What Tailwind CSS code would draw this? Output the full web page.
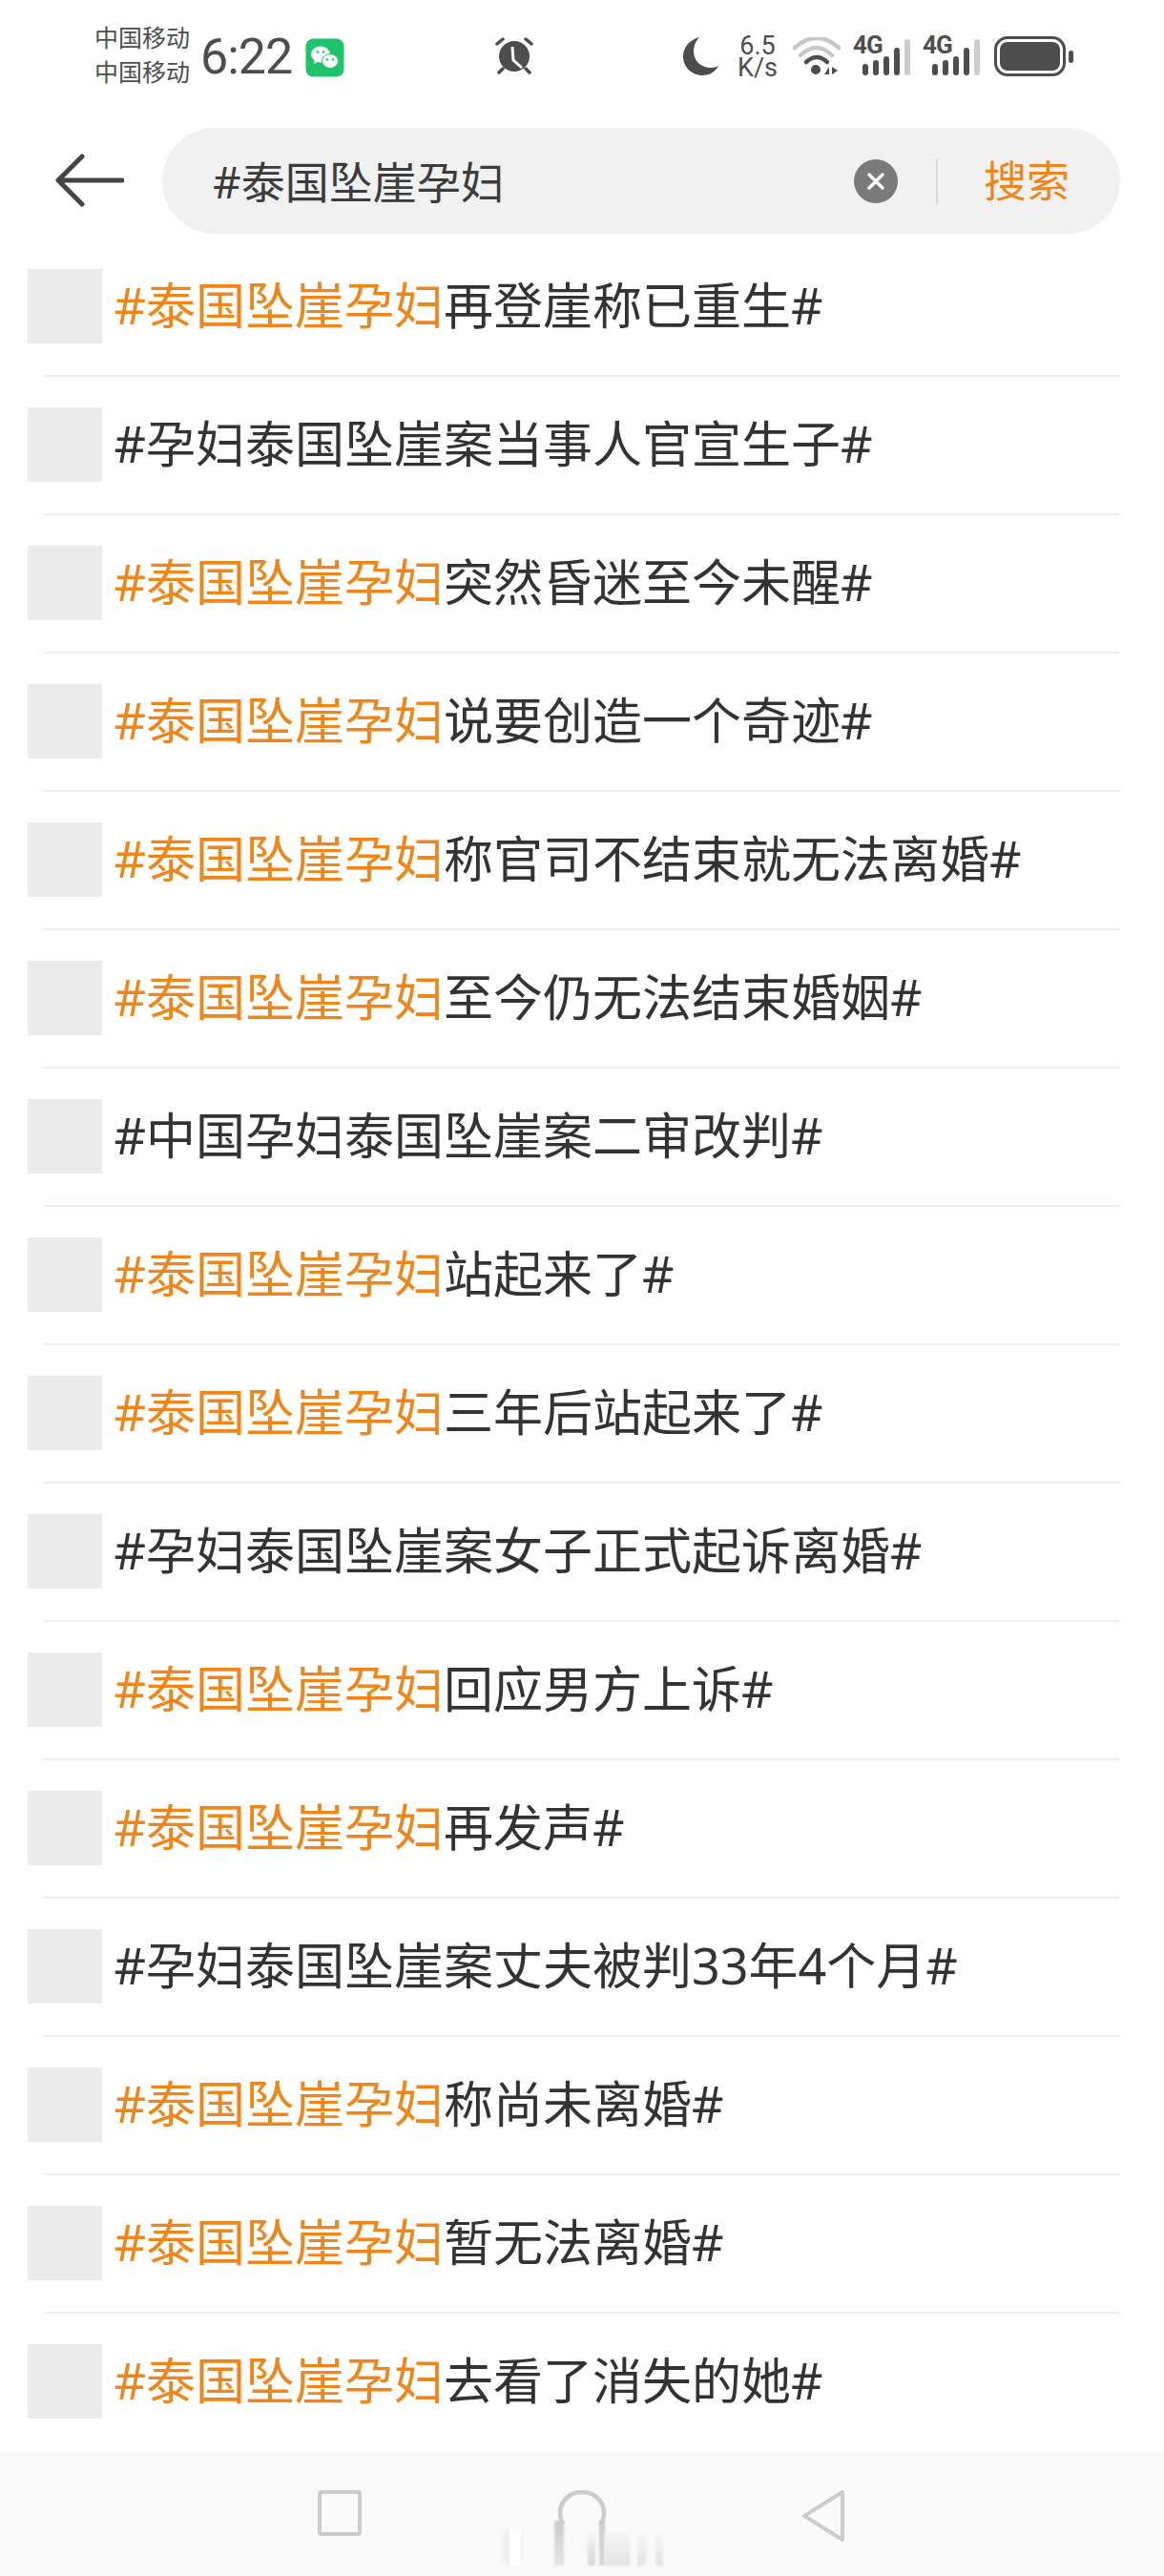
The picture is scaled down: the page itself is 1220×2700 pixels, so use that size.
<!DOCTYPE html>
<html lang="zh-CN">
<head>
<meta charset="utf-8">
<title>搜索</title>
<script src="https://cdn.jsdelivr.net/npm/@tailwindcss/browser@4"></script>
</head>
<body class="bg-white font-['Noto_Sans','Noto_Sans_CJK_SC',sans-serif]">
<div class="w-[1220px] h-[2700px] flex flex-col overflow-hidden bg-white">

  <!-- status bar -->
  <div class="h-[134px] shrink-0 flex items-start pt-[28px] text-[#4d4d4d]">
    <div class="ml-[99px] -mt-[8px] w-[104px] flex flex-col text-[25px] leading-[36px] font-['Noto_Sans_CJK_SC',sans-serif]">
      <span>中国移动</span>
      <span>中国移动</span>
    </div>
    <span class="ml-[7px] w-[97px] -mt-[2px] text-[52px] leading-[68px] tracking-[-1px] font-['Roboto',sans-serif]">6:22</span>
    <svg class="ml-[13px] mt-[12px]" width="41" height="41" viewBox="0 0 41 41">
      <rect x="0.5" y="0.5" width="40" height="40" rx="8" fill="#1fc36b"/>
      <ellipse cx="16" cy="17" rx="10" ry="8.500" fill="#fff"/>
      <path d="M10 23l-1 4 5-2.500z" fill="#fff"/>
      <ellipse cx="26" cy="24" rx="8.500" ry="7.500" fill="#fff" stroke="#1fc36b" stroke-width="1"/>
      <circle cx="13" cy="14.500" r="1.300" fill="#1fc36b"/>
      <circle cx="19" cy="14.500" r="1.300" fill="#1fc36b"/>
      <circle cx="23" cy="22.500" r="1.200" fill="#1fc36b"/>
      <circle cx="29" cy="22.500" r="1.200" fill="#1fc36b"/>
    </svg>
    <svg class="ml-[157px] mt-[11px]" width="42" height="40" viewBox="0 0 42 40">
      <circle cx="21" cy="20" r="16" fill="#4d4d4d"/>
      <path d="M19 10l1 14 9 8" fill="none" stroke="#fff" stroke-width="3"/>
      <path d="M3 7l6-5M39 7l-6-5M9 33l-4 4M33 33l4 4" stroke="#4d4d4d" stroke-width="3.500" stroke-linecap="round"/>
    </svg>
    <svg class="ml-[156px] mt-[11px]" width="37" height="40" viewBox="0 0 37 40">
      <path d="M17 0C6 3 0 11 0 20c0 11 9 20 20 20 8 0 14-4 17-10-2 1-5 2-8 2-11 0-18-8-18-17 0-6 2-11 6-15z" fill="#4d4d4d"/>
    </svg>
    <div class="ml-[20px] mt-[9px] w-[42px] flex flex-col items-center text-[#4d4d4d] text-[27px] leading-[23px] font-['Roboto',sans-serif]">
      <span>6.5</span>
      <span>K/s</span>
    </div>
    <svg class="ml-[16px] mt-[11px]" width="50" height="40" viewBox="0 0 50 40">
      <path d="M2 11Q25 -9 48 11" fill="none" stroke="#c8c8c8" stroke-width="4.500" stroke-linecap="round"/>
      <path d="M8 19Q24.500 3 41 19" fill="none" stroke="#c8c8c8" stroke-width="4.500" stroke-linecap="round"/>
      <path d="M14 26Q25 16 36 26" fill="none" stroke="#4d4d4d" stroke-width="4.500" stroke-linecap="round"/>
      <circle cx="24" cy="34" r="5" fill="#4d4d4d"/>
      <path d="M38 39V31l-5 8zM41 31v8l6-4z" fill="#4d4d4d"/>
    </svg>
    <div class="ml-[15px] mt-[11px] relative w-[58px] h-[40px]">
      <span class="absolute left-[-2px] top-[-8px] text-[26px] leading-[32px] font-bold tracking-[-1px] text-[#4d4d4d] font-['Roboto',sans-serif]">4G</span>
      <div class="absolute left-[8px] bottom-0 flex items-end gap-[5px]">
        <span class="w-[6px] h-[12px] rounded-full bg-[#4d4d4d]"></span>
        <span class="w-[6px] h-[16px] rounded-full bg-[#4d4d4d]"></span>
        <span class="w-[6px] h-[20px] rounded-full bg-[#4d4d4d]"></span>
        <span class="w-[6px] h-[29px] rounded-full bg-[#4d4d4d]"></span>
        <span class="w-[6px] h-[38px] rounded-full bg-[#cccccc]"></span>
      </div>
    </div>
    <div class="ml-[15px] mt-[11px] relative w-[58px] h-[40px]">
      <span class="absolute left-[-2px] top-[-8px] text-[26px] leading-[32px] font-bold tracking-[-1px] text-[#4d4d4d] font-['Roboto',sans-serif]">4G</span>
      <div class="absolute left-[8px] bottom-0 flex items-end gap-[5px]">
        <span class="w-[6px] h-[12px] rounded-full bg-[#4d4d4d]"></span>
        <span class="w-[6px] h-[16px] rounded-full bg-[#4d4d4d]"></span>
        <span class="w-[6px] h-[20px] rounded-full bg-[#4d4d4d]"></span>
        <span class="w-[6px] h-[29px] rounded-full bg-[#4d4d4d]"></span>
        <span class="w-[6px] h-[38px] rounded-full bg-[#cccccc]"></span>
      </div>
    </div>
    <div class="ml-[15px] mt-[10px] flex items-center gap-[3px]">
      <div class="w-[75px] h-[42px] rounded-[14px] border-[3px] border-[#4d4d4d] p-[3px]">
        <div class="w-full h-full rounded-[8px] bg-[#4d4d4d]"></div>
      </div>
      <span class="w-[5px] h-[13px] rounded-full bg-[#4d4d4d]"></span>
    </div>
  </div>

  <!-- search bar -->
  <div class="h-[116px] shrink-0 flex items-start pl-[58px]">
    <svg width="72" height="56" viewBox="0 0 72 56" class="mt-[27px]">
      <path d="M70 28H4M28 3L3 28l25 25" fill="none" stroke="#444444" stroke-width="5" stroke-linecap="round" stroke-linejoin="round"/>
    </svg>
    <div class="ml-[40px] w-[1004px] h-[111px] rounded-full bg-[#f1f1f1] flex items-center pl-[53px]">
      <span class="flex-1 text-[46px] leading-none text-[#3c3c3c]">#泰国坠崖孕妇</span>
      <svg width="46" height="46" viewBox="0 0 46 46">
        <circle cx="23" cy="23" r="23" fill="#7a7a7a"/>
        <path d="M16 16l14 14M30 16L16 30" stroke="#fff" stroke-width="3.500" stroke-linecap="round"/>
      </svg>
      <span class="ml-[40px] w-[2px] h-[46px] bg-[#d8d8d8]"></span>
      <span class="ml-[48px] mr-[53px] text-[45px] leading-none text-[#f0861a]">搜索</span>
    </div>
  </div>

  <!-- results -->
  <ul class="flex-1 text-[52px] leading-[78px] text-[#333333]">
    <li class="h-[145px] pt-[32px] relative flex items-start pl-[29px]"><span class="w-[78px] h-[78px] bg-[#ebebeb]"></span><p class="ml-[12.5px] -mt-[1px]"><span class="text-[#f0861a]">#泰国坠崖孕妇</span>再登崖称已重生#</p><span class="absolute left-[46px] right-[46px] bottom-0 h-[2px] bg-[#eeeeee]"></span></li>
    <li class="h-[145px] pt-[32px] relative flex items-start pl-[29px]"><span class="w-[78px] h-[78px] bg-[#ebebeb]"></span><p class="ml-[12.5px] -mt-[1px]">#孕妇泰国坠崖案当事人官宣生子#</p><span class="absolute left-[46px] right-[46px] bottom-0 h-[2px] bg-[#eeeeee]"></span></li>
    <li class="h-[145px] pt-[32px] relative flex items-start pl-[29px]"><span class="w-[78px] h-[78px] bg-[#ebebeb]"></span><p class="ml-[12.5px] -mt-[1px]"><span class="text-[#f0861a]">#泰国坠崖孕妇</span>突然昏迷至今未醒#</p><span class="absolute left-[46px] right-[46px] bottom-0 h-[2px] bg-[#eeeeee]"></span></li>
    <li class="h-[145px] pt-[32px] relative flex items-start pl-[29px]"><span class="w-[78px] h-[78px] bg-[#ebebeb]"></span><p class="ml-[12.5px] -mt-[1px]"><span class="text-[#f0861a]">#泰国坠崖孕妇</span>说要创造一个奇迹#</p><span class="absolute left-[46px] right-[46px] bottom-0 h-[2px] bg-[#eeeeee]"></span></li>
    <li class="h-[145px] pt-[32px] relative flex items-start pl-[29px]"><span class="w-[78px] h-[78px] bg-[#ebebeb]"></span><p class="ml-[12.5px] -mt-[1px]"><span class="text-[#f0861a]">#泰国坠崖孕妇</span>称官司不结束就无法离婚#</p><span class="absolute left-[46px] right-[46px] bottom-0 h-[2px] bg-[#eeeeee]"></span></li>
    <li class="h-[145px] pt-[32px] relative flex items-start pl-[29px]"><span class="w-[78px] h-[78px] bg-[#ebebeb]"></span><p class="ml-[12.5px] -mt-[1px]"><span class="text-[#f0861a]">#泰国坠崖孕妇</span>至今仍无法结束婚姻#</p><span class="absolute left-[46px] right-[46px] bottom-0 h-[2px] bg-[#eeeeee]"></span></li>
    <li class="h-[145px] pt-[32px] relative flex items-start pl-[29px]"><span class="w-[78px] h-[78px] bg-[#ebebeb]"></span><p class="ml-[12.5px] -mt-[1px]">#中国孕妇泰国坠崖案二审改判#</p><span class="absolute left-[46px] right-[46px] bottom-0 h-[2px] bg-[#eeeeee]"></span></li>
    <li class="h-[145px] pt-[32px] relative flex items-start pl-[29px]"><span class="w-[78px] h-[78px] bg-[#ebebeb]"></span><p class="ml-[12.5px] -mt-[1px]"><span class="text-[#f0861a]">#泰国坠崖孕妇</span>站起来了#</p><span class="absolute left-[46px] right-[46px] bottom-0 h-[2px] bg-[#eeeeee]"></span></li>
    <li class="h-[145px] pt-[32px] relative flex items-start pl-[29px]"><span class="w-[78px] h-[78px] bg-[#ebebeb]"></span><p class="ml-[12.5px] -mt-[1px]"><span class="text-[#f0861a]">#泰国坠崖孕妇</span>三年后站起来了#</p><span class="absolute left-[46px] right-[46px] bottom-0 h-[2px] bg-[#eeeeee]"></span></li>
    <li class="h-[145px] pt-[32px] relative flex items-start pl-[29px]"><span class="w-[78px] h-[78px] bg-[#ebebeb]"></span><p class="ml-[12.5px] -mt-[1px]">#孕妇泰国坠崖案女子正式起诉离婚#</p><span class="absolute left-[46px] right-[46px] bottom-0 h-[2px] bg-[#eeeeee]"></span></li>
    <li class="h-[145px] pt-[32px] relative flex items-start pl-[29px]"><span class="w-[78px] h-[78px] bg-[#ebebeb]"></span><p class="ml-[12.5px] -mt-[1px]"><span class="text-[#f0861a]">#泰国坠崖孕妇</span>回应男方上诉#</p><span class="absolute left-[46px] right-[46px] bottom-0 h-[2px] bg-[#eeeeee]"></span></li>
    <li class="h-[145px] pt-[32px] relative flex items-start pl-[29px]"><span class="w-[78px] h-[78px] bg-[#ebebeb]"></span><p class="ml-[12.5px] -mt-[1px]"><span class="text-[#f0861a]">#泰国坠崖孕妇</span>再发声#</p><span class="absolute left-[46px] right-[46px] bottom-0 h-[2px] bg-[#eeeeee]"></span></li>
    <li class="h-[145px] pt-[32px] relative flex items-start pl-[29px]"><span class="w-[78px] h-[78px] bg-[#ebebeb]"></span><p class="ml-[12.5px] -mt-[1px]">#孕妇泰国坠崖案丈夫被判33年4个月#</p><span class="absolute left-[46px] right-[46px] bottom-0 h-[2px] bg-[#eeeeee]"></span></li>
    <li class="h-[145px] pt-[32px] relative flex items-start pl-[29px]"><span class="w-[78px] h-[78px] bg-[#ebebeb]"></span><p class="ml-[12.5px] -mt-[1px]"><span class="text-[#f0861a]">#泰国坠崖孕妇</span>称尚未离婚#</p><span class="absolute left-[46px] right-[46px] bottom-0 h-[2px] bg-[#eeeeee]"></span></li>
    <li class="h-[145px] pt-[32px] relative flex items-start pl-[29px]"><span class="w-[78px] h-[78px] bg-[#ebebeb]"></span><p class="ml-[12.5px] -mt-[1px]"><span class="text-[#f0861a]">#泰国坠崖孕妇</span>暂无法离婚#</p><span class="absolute left-[46px] right-[46px] bottom-0 h-[2px] bg-[#eeeeee]"></span></li>
    <li class="h-[145px] pt-[32px] relative flex items-start pl-[29px]"><span class="w-[78px] h-[78px] bg-[#ebebeb]"></span><p class="ml-[12.5px] -mt-[1px]"><span class="text-[#f0861a]">#泰国坠崖孕妇</span>去看了消失的她#</p></li>
  </ul>

  <!-- navigation bar -->
  <div class="h-[132px] shrink-0 bg-[#fafafa] relative flex items-start pt-[40px]">
    <svg class="ml-[333px]" width="46" height="48" viewBox="0 0 46 48">
      <rect x="2" y="2" width="42" height="44" rx="2" fill="none" stroke="#cccccc" stroke-width="4"/>
    </svg>
    <svg class="ml-[205px]" width="52" height="80" viewBox="0 0 52 80">
      <path d="M6 36C-3 17 10 2 26 2S55 17 46 36" fill="none" stroke="#cccccc" stroke-width="4.500"/>
    </svg>
    <svg class="ml-[204px]" width="46" height="54" viewBox="0 0 46 54">
      <path d="M43 2v50L3 27z" fill="none" stroke="#cccccc" stroke-width="4" stroke-linejoin="round"/>
    </svg>
    <!-- smeared gesture bar ghost over the home icon -->
    <span class="absolute left-[527px] top-[82px] w-[20px] h-[37px] bg-[#efefef] blur-[2px]"></span>
    <span class="absolute left-[534px] top-[80px] w-[12px] h-[40px] rounded-b-[3px] bg-white"></span>
    <span class="absolute left-[581px] top-[72px] w-[10px] h-[47px] bg-linear-to-b from-[#cccccc] to-[#e6e6e6] blur-[1px]"></span>
    <span class="absolute left-[616px] top-[85px] w-[8px] h-[34px] bg-linear-to-b from-[#f5f5f5] to-[#d8d8d8] blur-[1px]"></span>
    <span class="absolute left-[628px] top-[72px] w-[6px] h-[47px] bg-linear-to-b from-[#cccccc] to-[#d8d8d8] blur-[1px]"></span>
    <span class="absolute left-[634px] top-[85px] w-[26px] h-[34px] bg-linear-to-b from-[#f5f5f5] to-[#e4e4e4] blur-[1px]"></span>
    <span class="absolute left-[668px] top-[85px] w-[9px] h-[34px] bg-linear-to-b from-[#f8f8f8] to-[#e4e4e4] blur-[1px]"></span>
    <span class="absolute left-[687px] top-[85px] w-[8px] h-[34px] bg-linear-to-b from-[#f8f8f8] to-[#e4e4e4] blur-[1px]"></span>
  </div>
</div>
</body>
</html>
